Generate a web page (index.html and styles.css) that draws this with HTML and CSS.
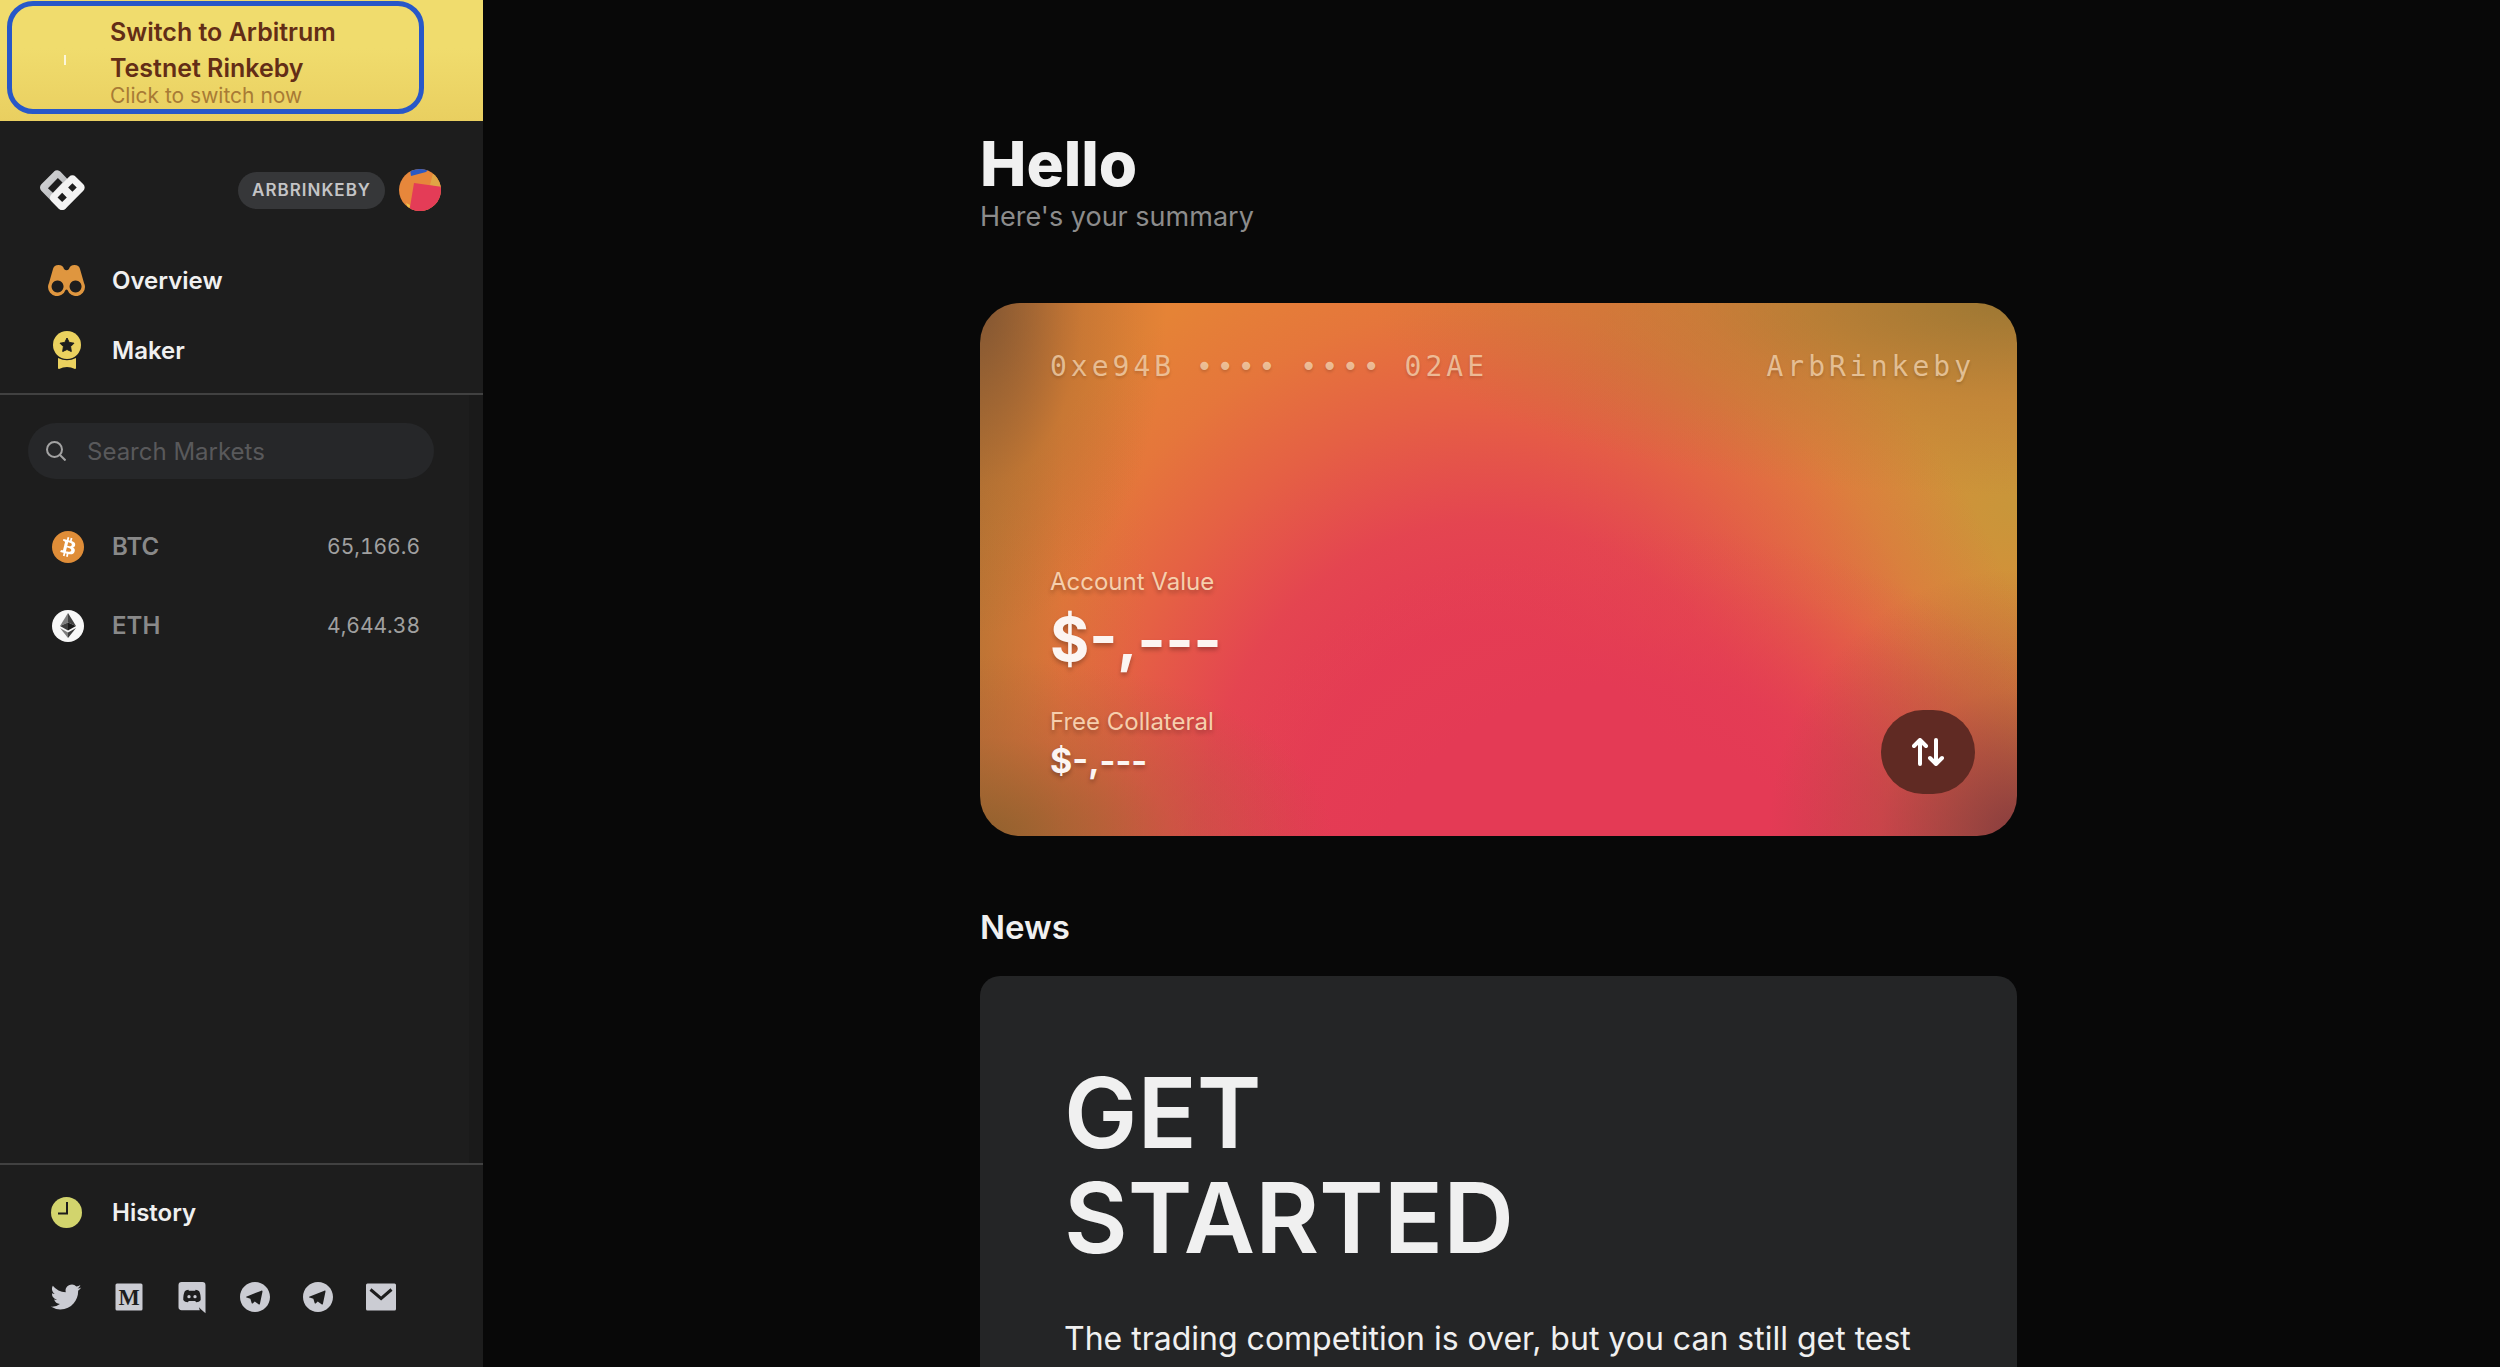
FILE: index.html
```html
<!DOCTYPE html>
<html lang="en">
  <head>
    <meta charset="utf-8" />
    <meta name="viewport" content="width=device-width, initial-scale=1" />
    <title>Overview</title>
    <link rel="stylesheet" href="styles.css">
  </head>
  <body>
    <aside class="sidebar">
      <div class="banner">
        <button class="switch-btn">
          <span class="spinner"></span>
          <span class="switch-text">
            <strong>Switch to Arbitrum Testnet Rinkeby</strong>
            <small>Click to switch now</small>
          </span>
        </button>
      </div>

      <header class="account">
        <a href="#" class="logo" aria-label="Home">
          <svg viewBox="0 0 136 122" width="45" height="41">
            <defs>
              <linearGradient id="logoGray" x1="0" y1="0" x2="1" y2="1">
                <stop offset="0" stop-color="#d2d3d5" />
                <stop offset="1" stop-color="#a9abae" />
              </linearGradient>
            </defs>
            <path d="M52 14 L14 52 L67 106 L90 54z" fill="url(#logoGray)" stroke="url(#logoGray)" stroke-width="28" stroke-linejoin="round" />
            <path d="M98 29 L121 52 L67 106 L44 83z" fill="#f3f3f3" stroke="#f3f3f3" stroke-width="28" stroke-linejoin="round" />
            <path d="M54 23 L68 37 L39 68 L24 54z M98 39 L111 52 L98 65 L85 52z M67 68 L81 82 L67 96 L53 82z" fill="#1d1d1d" />
          </svg>
        </a>
        <div class="account-info">
          <span class="network">ARBRINKEBY</span>
          <button class="avatar" aria-label="Account">
            <svg viewBox="0 0 42 42" width="42" height="42">
              <clipPath id="round"><circle cx="21" cy="21" r="21" /></clipPath>
              <g clip-path="url(#round)">
                <path d="M0 0h42v42H0z" fill="#e7873b" />
                <path d="M34 4l10 1v15l-13-4z" fill="#e0a545" />
                <path d="M11 0h19l-3 3-15 4z" fill="#2b59c4" />
                <path d="M15 14l28 4v26H10z" fill="#e43c57" />
                <path d="M7 34l4 2-1 6z" fill="#efc04b" />
              </g>
            </svg>
          </button>
        </div>
      </header>

      <nav class="menu">
        <a href="#" class="menu-item">
          <span class="menu-icon">
            <svg viewBox="0 0 37 31" width="37" height="31" fill="#df963f">
              <path fill-rule="evenodd" d="M5 4Q6 0 10.500 0Q15 0 16 4Q18.500 6.500 21 4Q22 0 26.500 0Q31 0 32 4L36 18Q37 20 37 22A9 9 0 0 1 19.500 25Q18.500 24 17.500 25A9 9 0 0 1 0 22Q0 20 1 18zM9.500 15.500a6 6 0 1 0 .1 0zM27.500 15.500a6 6 0 1 0 .1 0z" />
            </svg>
          </span>
          Overview
        </a>
        <a href="#" class="menu-item">
          <span class="menu-icon">
            <svg viewBox="0 0 28 38" width="28" height="38">
              <circle cx="14" cy="14" r="14" fill="#ebd25f" />
              <path d="M14 7l2.200 4.400 4.800.8-3.400 3.400.7 4.900-4.300-2-4.300 2 .7-4.900L7 12.200l4.800-.8z" fill="#1d1d1d" stroke="#1d1d1d" stroke-linejoin="round" />
              <path d="M5 27q9 4.500 18 0v10q0 1-1 1-8-4-16 0-1 0-1-1z" fill="#ebd25f" />
            </svg>
          </span>
          Maker
        </a>
      </nav>

      <section class="markets">
        <label class="search">
          <svg viewBox="0 0 20 20" width="20" height="20" fill="none" stroke="#a3a3a3" stroke-width="2">
            <circle cx="8.500" cy="8.500" r="7.500" />
            <path d="M14 14l5.500 5.500" />
          </svg>
          <input type="search" placeholder="Search Markets" aria-label="Search Markets" />
        </label>
        <a href="#" class="market">
          <span class="menu-icon market-icon">
            <svg viewBox="0 0 32 32" width="32" height="32">
              <circle cx="16" cy="16" r="16" fill="#df8d38" />
              <path fill="#fff" d="M23.189 14.020c.314-2.096-1.283-3.223-3.465-3.975l.708-2.840-1.728-.43-.69 2.765c-.454-.114-.92-.22-1.385-.326l.695-2.783L15.596 6l-.708 2.839c-.376-.086-.746-.17-1.104-.26l.002-.009-2.384-.595-.46 1.846s1.283.294 1.256.312c.7.175.826.638.805 1.006l-.806 3.235c.048.012.11.03.18.057l-.183-.045-1.130 4.532c-.086.212-.303.531-.793.41.018.025-1.256-.313-1.256-.313l-.858 1.978 2.250.561c.418.105.828.215 1.231.318l-.715 2.872 1.727.43.708-2.840c.472.127.93.245 1.378.357l-.706 2.828 1.728.43.715-2.866c2.948.558 5.164.333 6.097-2.333.752-2.146-.037-3.385-1.588-4.192 1.130-.26 1.980-1.003 2.207-2.538zm-3.950 5.538c-.533 2.147-4.148.986-5.320.695l.95-3.805c1.172.293 4.929.872 4.370 3.110zm.535-5.569c-.487 1.953-3.495.96-4.470.717l.86-3.450c.975.243 4.118.696 3.610 2.733z" />
            </svg>
          </span>
          <span class="market-name">BTC</span>
          <span class="market-price">65,166.6</span>
        </a>
        <a href="#" class="market">
          <span class="menu-icon market-icon">
            <svg viewBox="0 0 32 32" width="32" height="32">
              <circle cx="16" cy="16" r="16" fill="#f7f7f7" />
              <path d="M16 3L8 16l8-3.500z" fill="#7d7d7d" />
              <path d="M16 3l8 13-8-3.500z" fill="#414141" />
              <path d="M8 16l8-3.500V20.500z" fill="#3c3c3c" />
              <path d="M24 16l-8-3.500V20.500z" fill="#191919" />
              <path d="M8 18l8 4.500V28z" fill="#7d7d7d" />
              <path d="M24 18l-8 4.500V28z" fill="#3c3c3c" />
            </svg>
          </span>
          <span class="market-name">ETH</span>
          <span class="market-price">4,644.38</span>
        </a>
      </section>

      <footer class="sidebar-footer">
        <a href="#" class="menu-item">
          <span class="menu-icon">
            <svg viewBox="0 0 31 31" width="31" height="31">
              <circle cx="15.500" cy="15.500" r="15.500" fill="#d2d46d" />
              <path d="M16 5v11.500H7" fill="none" stroke="#1d1d1d" stroke-width="2" />
            </svg>
          </span>
          History
        </a>
        <div class="socials">
          <a href="#" aria-label="Twitter">
            <svg viewBox="0 0 24 24"><path d="M22.162 5.656a8.384 8.384 0 0 1-2.402.658A4.196 4.196 0 0 0 21.600 4c-.82.488-1.719.83-2.656 1.015a4.182 4.182 0 0 0-7.126 3.814 11.874 11.874 0 0 1-8.620-4.370 4.168 4.168 0 0 0-.566 2.103c0 1.450.738 2.731 1.860 3.481a4.168 4.168 0 0 1-1.894-.523v.052a4.185 4.185 0 0 0 3.355 4.101 4.210 4.210 0 0 1-1.890.072A4.185 4.185 0 0 0 7.970 16.650a8.394 8.394 0 0 1-6.191 1.732 11.830 11.830 0 0 0 6.410 1.880c7.693 0 11.900-6.373 11.900-11.900 0-.18-.005-.362-.013-.54a8.496 8.496 0 0 0 2.087-2.165z" /></svg>
          </a>
          <a href="#" aria-label="Medium">
            <svg viewBox="0 0 24 24">
              <rect x="3" y="3" width="18" height="18" rx="1" />
              <text x="12" y="17" class="medium-m">M</text>
            </svg>
          </a>
          <a href="#" aria-label="Discord">
            <svg viewBox="0 0 24 24">
              <path d="M5.100 2h13.800a2.100 2.100 0 0 1 2.100 2.100V22.800l-2.900-2.500-1.500-1.400.6 1.900H5.100A2.100 2.100 0 0 1 3 18.700V4.100A2.100 2.100 0 0 1 5.100 2z" />
              <path fill="#1d1d1d" d="M9.600 7.200c-1 .1-1.900.5-2.400.9-.7 1.400-1.100 3.400-1 5.900.6 1 1.900 1.500 3 1.500l.7-.9h4.200l.7.9c1.100 0 2.400-.5 3-1.500.1-2.500-.3-4.500-1-5.900-.6-.4-1.500-.8-2.400-.9l-.3.6H9.900z" />
              <circle cx="10" cy="11.800" r="1.100" />
              <circle cx="14" cy="11.800" r="1.100" />
            </svg>
          </a>
          <a href="#" aria-label="Telegram">
            <svg viewBox="0 0 24 24"><path d="M12 22C6.477 22 2 17.523 2 12S6.477 2 12 2s10 4.477 10 10-4.477 10-10 10zm-3.110-8.830l.013-.007.87 2.870c.112.311.266.367.453.341.188-.025.287-.126.41-.244l1.188-1.148 2.550 1.888c.466.257.801.124.917-.432l1.657-7.822c.183-.728-.137-1.020-.702-.788l-9.733 3.760c-.664.266-.66.638-.12.803l2.497.78z" /></svg>
          </a>
          <a href="#" aria-label="Telegram announcements">
            <svg viewBox="0 0 24 24"><path d="M12 22C6.477 22 2 17.523 2 12S6.477 2 12 2s10 4.477 10 10-4.477 10-10 10zm-3.110-8.830l.013-.007.87 2.870c.112.311.266.367.453.341.188-.025.287-.126.41-.244l1.188-1.148 2.550 1.888c.466.257.801.124.917-.432l1.657-7.822c.183-.728-.137-1.020-.702-.788l-9.733 3.760c-.664.266-.66.638-.12.803l2.497.78z" /></svg>
          </a>
          <a href="#" aria-label="Email">
            <svg viewBox="0 0 24 24"><path d="M3 3h18a1 1 0 0 1 1 1v16a1 1 0 0 1-1 1H3a1 1 0 0 1-1-1V4a1 1 0 0 1 1-1zm9.060 8.683L5.648 6.238 4.353 7.762l7.720 6.555 7.581-6.560-1.308-1.513-6.285 5.439z" /></svg>
          </a>
        </div>
      </footer>
    </aside>

    <main class="content">
      <div class="column">
        <h1>Hello</h1>
        <p class="subtitle">Here's your summary</p>

        <section class="card">
          <div class="card-top">
            <span>0xe94B •••• •••• 02AE</span>
            <span>ArbRinkeby</span>
          </div>
          <div class="card-bottom">
            <dl class="balances">
              <dt>Account Value</dt>
              <dd class="account-value">$-,---</dd>
              <dt>Free Collateral</dt>
              <dd class="collateral-value">$-,---</dd>
            </dl>
            <button class="transfer-btn" aria-label="Transfer">
              <svg viewBox="0 0 32 28" width="32" height="28" fill="none" stroke="#fff" stroke-width="4" stroke-linecap="round" stroke-linejoin="round">
                <path d="M8 26V3M2 8l6-6 6 6" />
                <path d="M24 2v23M18 20l6 6 6-6" />
              </svg>
            </button>
          </div>
        </section>

        <h2>News</h2>
        <article class="news">
          <h3>GET<br />STARTED</h3>
          <p>The trading competition is over, but you can still get test</p>
        </article>
      </div>
    </main>
  </body>
</html>
```
FILE: styles.css
```css
* {
  box-sizing: border-box;
}
body {
  margin: 0;
  display: flex;
  height: 100vh;
  overflow: hidden;
  background-color: #080808;
  color: #f0f0f0;
  font-family: Inter, "Liberation Sans", sans-serif;
  font-size: 24px;
}
a {
  color: inherit;
  text-decoration: none;
}
button {
  border: none;
  padding: 0;
  background: none;
  font-family: inherit;
  cursor: pointer;
}
svg {
  display: block;
}

/* Sidebar */
.sidebar {
  flex: 0 0 483px;
  min-width: 0;
  display: flex;
  flex-direction: column;
  background-color: #1d1d1d;
}
.banner {
  padding: 1px 59px 7px 7px;
  background: linear-gradient(#f0dc6d 40%, #e9cf60);
}
.switch-btn {
  display: flex;
  align-items: center;
  width: 100%;
  padding: 8px 40px 3px 52px;
  border: 5px solid #2858c8;
  border-radius: 26px;
  text-align: left;
}
.spinner {
  width: 2px;
  height: 10px;
  margin-right: 44px;
  background-color: #fbf6da;
}
.switch-text {
  flex: 1;
}
.switch-text strong {
  display: block;
  font-size: 25px;
  font-weight: 600;
  line-height: 36px;
  color: #632d16;
}
.switch-text small {
  display: block;
  font-size: 21px;
  line-height: 20px;
  color: #a87b35;
}
.account {
  display: flex;
  justify-content: space-between;
  align-items: center;
  padding: 48px 42px 34px 40px;
}
.account-info {
  display: flex;
  align-items: center;
  gap: 14px;
}
.network {
  padding: 0 14px;
  border-radius: 19px;
  background-color: #363739;
  color: #c4c4c6;
  font-size: 17px;
  font-weight: 600;
  line-height: 37px;
  letter-spacing: 1px;
}
.menu {
  padding-bottom: 8px;
  border-bottom: 2px solid #414141;
}
.menu-item {
  display: flex;
  align-items: center;
  height: 70px;
  padding-left: 48px;
  font-weight: 600;
}
.menu-icon {
  display: flex;
  justify-content: center;
  width: 37px;
  margin-right: 27px;
}
.markets {
  flex: 1;
  padding: 28px 35px 0 28px;
  border-right: 14px solid #1a1a1a;
}
.search {
  display: flex;
  align-items: center;
  gap: 21px;
  height: 56px;
  margin-bottom: 28px;
  padding: 0 18px;
  border-radius: 28px;
  background-color: #262729;
}
.search input {
  width: 100%;
  padding: 0;
  border: none;
  outline: none;
  background: none;
  color: #f0f0f0;
  font: inherit;
}
.search svg {
  flex-shrink: 0;
}
.search input::placeholder {
  color: #59595b;
}
.market {
  display: flex;
  align-items: center;
  height: 79px;
  padding: 0 14px 0 20px;
}
.market-icon {
  width: 40px;
  margin-right: 24px;
}
.market-name {
  flex: 1;
  color: #898989;
  font-weight: 600;
}
.market-price {
  color: #a0a0a0;
  font-size: 21px;
  font-variant-numeric: tabular-nums;
}
.sidebar-footer {
  padding: 12px 0 52px;
  border-top: 2px solid #414141;
}
.socials {
  display: flex;
  gap: 27px;
  margin-top: 32px;
  padding-left: 48px;
}
.socials svg {
  width: 36px;
  height: 36px;
  fill: #cbccd3;
}
.socials .medium-m {
  fill: #1d1d1d;
  font-family: "Liberation Serif", serif;
  font-size: 15px;
  font-weight: 700;
  text-anchor: middle;
}

/* Main column */
.content {
  flex: 1;
  min-width: 0;
  padding-left: 14px;
  overflow-y: auto;
  scrollbar-width: none;
}
.column {
  max-width: 1037px;
  margin: 0 auto;
  padding-top: 126px;
}
h1 {
  margin: 0;
  font-size: 62px;
  font-weight: 800;
  line-height: 76px;
}
.subtitle {
  margin: 0 0 71px;
  color: #8c8c8c;
  font-size: 27px;
  line-height: 30px;
}
.card {
  display: flex;
  flex-direction: column;
  justify-content: space-between;
  min-height: 533px;
  padding: 42px 42px 42px 70px;
  border-radius: 40px;
  background:
    radial-gradient(ellipse 18% 62% at 0 0, rgba(115, 78, 50, 0.8), rgba(150, 100, 50, 0.3) 55%, rgba(180, 110, 50, 0)),
    radial-gradient(ellipse 62% 36% at 100% 0, rgba(140, 115, 50, 0.8), rgba(165, 120, 55, 0.4) 50%, rgba(190, 125, 55, 0)),
    radial-gradient(ellipse 24% 50% at 100% 100%, rgba(130, 58, 62, 0.95), rgba(160, 75, 62, 0.4) 55%, rgba(190, 80, 65, 0)),
    radial-gradient(ellipse 34% 34% at 0 100%, rgba(140, 95, 45, 0.9), rgba(170, 95, 55, 0.4) 55%, rgba(190, 75, 70, 0)),
    linear-gradient(90deg, rgba(165, 110, 50, 0.6), rgba(190, 115, 50, 0.2) 8%, rgba(200, 120, 50, 0) 16%),
    radial-gradient(ellipse 46% 66% at 64% 108%, #e43a55 36%, rgba(228, 58, 85, 0.8) 55%, rgba(229, 62, 82, 0.45) 72%, rgba(230, 66, 80, 0.15) 87%, rgba(230, 70, 78, 0)),
    radial-gradient(ellipse 55% 118% at 49% 100%, #e43a55 32%, rgba(228, 58, 85, 0.85) 50%, rgba(229, 62, 82, 0.5) 68%, rgba(230, 66, 80, 0.2) 84%, rgba(230, 70, 78, 0)),
    radial-gradient(ellipse 46% 74% at 100% 38%, #c8963a, rgba(218, 146, 58, 0.6) 45%, rgba(226, 132, 56, 0)),
    #e58336;
}
.card-top {
  display: flex;
  justify-content: space-between;
  color: rgba(245, 215, 180, 0.75);
  font-family: "DejaVu Sans Mono", monospace;
  font-size: 28px;
  line-height: 44px;
  letter-spacing: 4px;
  text-shadow: 0 2px 3px rgba(0, 0, 0, 0.15);
}
.card-bottom {
  display: flex;
  justify-content: space-between;
  align-items: flex-end;
}
.balances {
  margin: 0;
  padding-bottom: 10px;
  text-shadow: 0 3px 4px rgba(0, 0, 0, 0.25);
}
.balances dt {
  color: #f6cfad;
  line-height: 32px;
}
.balances dd {
  margin: 0;
  color: #fcf5f2;
  font-weight: 700;
}
.balances .account-value {
  margin-bottom: 26px;
  font-size: 60px;
  line-height: 82px;
}
.balances .collateral-value {
  font-size: 34px;
  line-height: 46px;
}
.transfer-btn {
  display: flex;
  justify-content: center;
  align-items: center;
  width: 94px;
  height: 84px;
  border-radius: 42px;
  background-color: #602a23;
}
h2 {
  margin: 69px 0 27px;
  font-size: 33px;
  font-weight: 600;
  line-height: 44px;
}
.news {
  padding: 84px;
  border-radius: 20px;
  background-color: #242526;
}
.news h3 {
  margin: 0 0 44px;
  font-size: 98px;
  font-weight: 600;
  line-height: 105px;
}
.news p {
  margin: 0;
  font-size: 32px;
  line-height: 50px;
}
```
